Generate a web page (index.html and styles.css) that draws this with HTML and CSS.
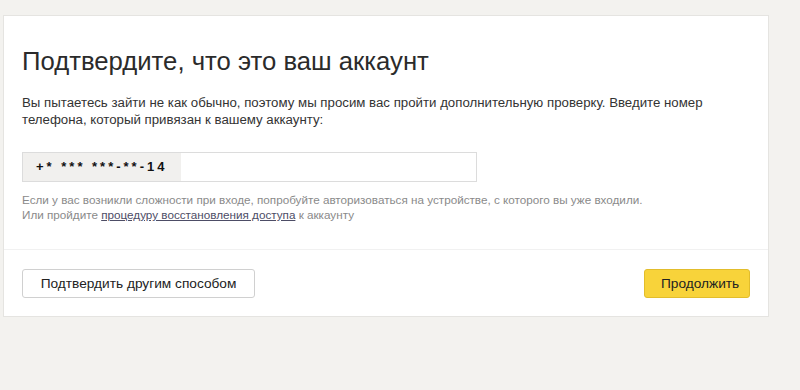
FILE: index.html
```html
<!DOCTYPE html>
<html lang="ru">
<head>
    <meta charset="UTF-8">
    <meta name="viewport" content="width=device-width, initial-scale=1.0">
    <title>Подтвердите, что это ваш аккаунт</title>
    <link rel="stylesheet" href="styles.css">
</head>
<body>

    <div class="card">
        <div class="card-body">
            <h1 class="title">Подтвердите, что это ваш аккаунт</h1>
            <p class="lead">Вы пытаетесь зайти не как обычно, поэтому мы просим вас пройти дополнительную проверку. Введите номер телефона, который привязан к вашему аккаунту:</p>

            <div class="phone-field">
                <span class="phone-value">+* *** ***-**-14</span>
            </div>

            <p class="hint">
                Если у вас возникли сложности при входе, попробуйте авторизоваться на устройстве, с которого вы уже входили.<br>
                Или пройдите <a href="#" class="hint-link">процедуру восстановления доступа</a> к аккаунту
            </p>
        </div>

        <div class="card-footer">
            <button class="btn btn-plain">Подтвердить другим способом</button>
            <button class="btn btn-action">Продолжить</button>
        </div>
    </div>

</body>
</html>
```

FILE: styles.css
```css
body {
    margin: 0;
    background-color: #f3f2ef;
    font-family: 'Liberation Sans', Arial, sans-serif;
    color: #333333;
}

.card {
    margin: 15px 0 0 3px;
    width: 764px;
    background-color: #ffffff;
    border: 1px solid #e5e4e1;
}

.card-body {
    padding: 30px 18px 27px;
    border-bottom: 1px solid #f1f1f1;
}

.title {
    margin: 0;
    font-size: 25.7px;
    line-height: 30px;
    font-weight: normal;
    color: #2b2b2b;
}

.lead {
    margin: 18px 0 0;
    font-size: 13.25px;
    line-height: 17px;
    color: #333333;
}

.phone-field {
    margin-top: 24px;
    width: 453px;
    height: 28px;
    border: 1px solid #dcdcdc;
    display: flex;
}

.phone-value {
    width: 145px;
    padding-left: 13px;
    background-color: #f1f0ee;
    font-size: 13px;
    font-weight: bold;
    letter-spacing: 3px;
    line-height: 28px;
    color: #111111;
    white-space: nowrap;
}

.hint {
    margin: 10px 0 0;
    font-size: 11.7px;
    line-height: 15px;
    color: #8a8a8a;
}

.hint-link {
    color: #4d4d66;
}

.card-footer {
    display: flex;
    justify-content: space-between;
    padding: 19px 18px 18px;
}

.btn {
    height: 29px;
    padding: 0 16px;
    border-radius: 3px;
    font-family: 'Liberation Sans', Arial, sans-serif;
    font-size: 13.7px;
    color: #222222;
    cursor: pointer;
}

.btn-plain {
    width: 233px;
    background-color: #ffffff;
    border: 1px solid #d0d0d0;
}

.btn-action {
    width: 106px;
    background-color: #f8d33a;
    border: 1px solid #e2bd2c;
}
```
